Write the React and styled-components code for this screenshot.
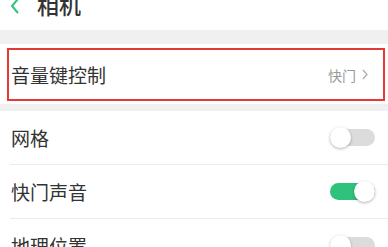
import React, { useState } from "react";
import styled, { createGlobalStyle } from "styled-components";

const GlobalStyle = createGlobalStyle`
  html, body {
    margin: 0;
    padding: 0;
    background: #f0f0f0;
    font-family: "Noto Sans CJK SC", "Noto Sans", sans-serif;
  }
`;

const Page = styled.div`
  width: 388px;
  height: 247px;
  overflow: hidden;
  background: #f0f0f0;
`;

const Header = styled.div`
  height: 30px;
  background: #fff;
  display: flex;
  align-items: flex-start;
  overflow: hidden;
`;

const Back = styled.svg`
  margin: -2px 0 0 10px;
  flex: none;
`;

const Title = styled.h1`
  margin: -8px 0 0 17px;
  font-size: 22px;
  line-height: 24px;
  font-weight: 500;
  color: #333;
`;

const Section = styled.div`
  background: #fff;
  margin-top: ${(p) => p.gap}px;
  display: flow-root;
`;

const Highlight = styled.div`
  margin: 4px 3px 3px 7px;
  border: 2px solid #e53935;
  height: 49px;
  display: flex;
  align-items: center;
  padding: 0 15px 0 2px;
`;

const Row = styled.div`
  height: 53px;
  margin-left: 10px;
  display: flex;
  align-items: center;
  padding-right: 12px;
  border-top: ${(p) => (p.first ? "none" : "1px solid #ececec")};
`;

const Label = styled.span`
  flex: 1;
  font-size: 19px;
  color: #333;
  padding-left: ${(p) => p.pad || 0}px;
`;

const Value = styled.span`
  font-size: 14px;
  color: #999;
  display: flex;
  align-items: center;
  gap: 6px;
`;

const Track = styled.button`
  position: relative;
  width: 45px;
  height: 17px;
  border: none;
  border-radius: 9px;
  padding: 0;
  background: ${(p) => (p.on ? "#2fc27a" : "#dcdcdc")};
  cursor: pointer;
  margin-right: 1px;
`;

const Knob = styled.span`
  position: absolute;
  top: -2px;
  left: ${(p) => (p.on ? "24px" : "0")};
  width: 21px;
  height: 21px;
  border-radius: 50%;
  background: #fff;
  box-shadow: 0 1px 3px rgba(0, 0, 0, 0.3);
`;

const Toggle = ({ initial }) => {
  const [on, setOn] = useState(initial);
  return (
    <Track on={on ? 1 : 0} onClick={() => setOn(!on)}>
      <Knob on={on ? 1 : 0} />
    </Track>
  );
};

export default function App() {
  return (
    <Page>
      <GlobalStyle />
      <Header>
        <Back width="10" height="16" viewBox="0 0 10 16">
          <path d="M8 1 L2 8 L8 15" fill="none" stroke="#2fc27a" strokeWidth="2" />
        </Back>
        <Title>相机</Title>
      </Header>
      <Section gap={14}>
        <Highlight>
          <Label>音量键控制</Label>
          <Value>
            快门
            <svg width="6" height="11" viewBox="0 0 6 11">
              <path d="M1 1 L5 5.5 L1 10" fill="none" stroke="#aaa" strokeWidth="1.2" />
            </svg>
          </Value>
        </Highlight>
      </Section>
      <Section gap={7}>
        <Row first>
          <Label pad={1}>网格</Label>
          <Toggle initial={false} />
        </Row>
        <Row>
          <Label pad={1}>快门声音</Label>
          <Toggle initial={true} />
        </Row>
        <Row>
          <Label pad={1}>地理位置</Label>
          <Toggle initial={false} />
        </Row>
      </Section>
    </Page>
  );
}
